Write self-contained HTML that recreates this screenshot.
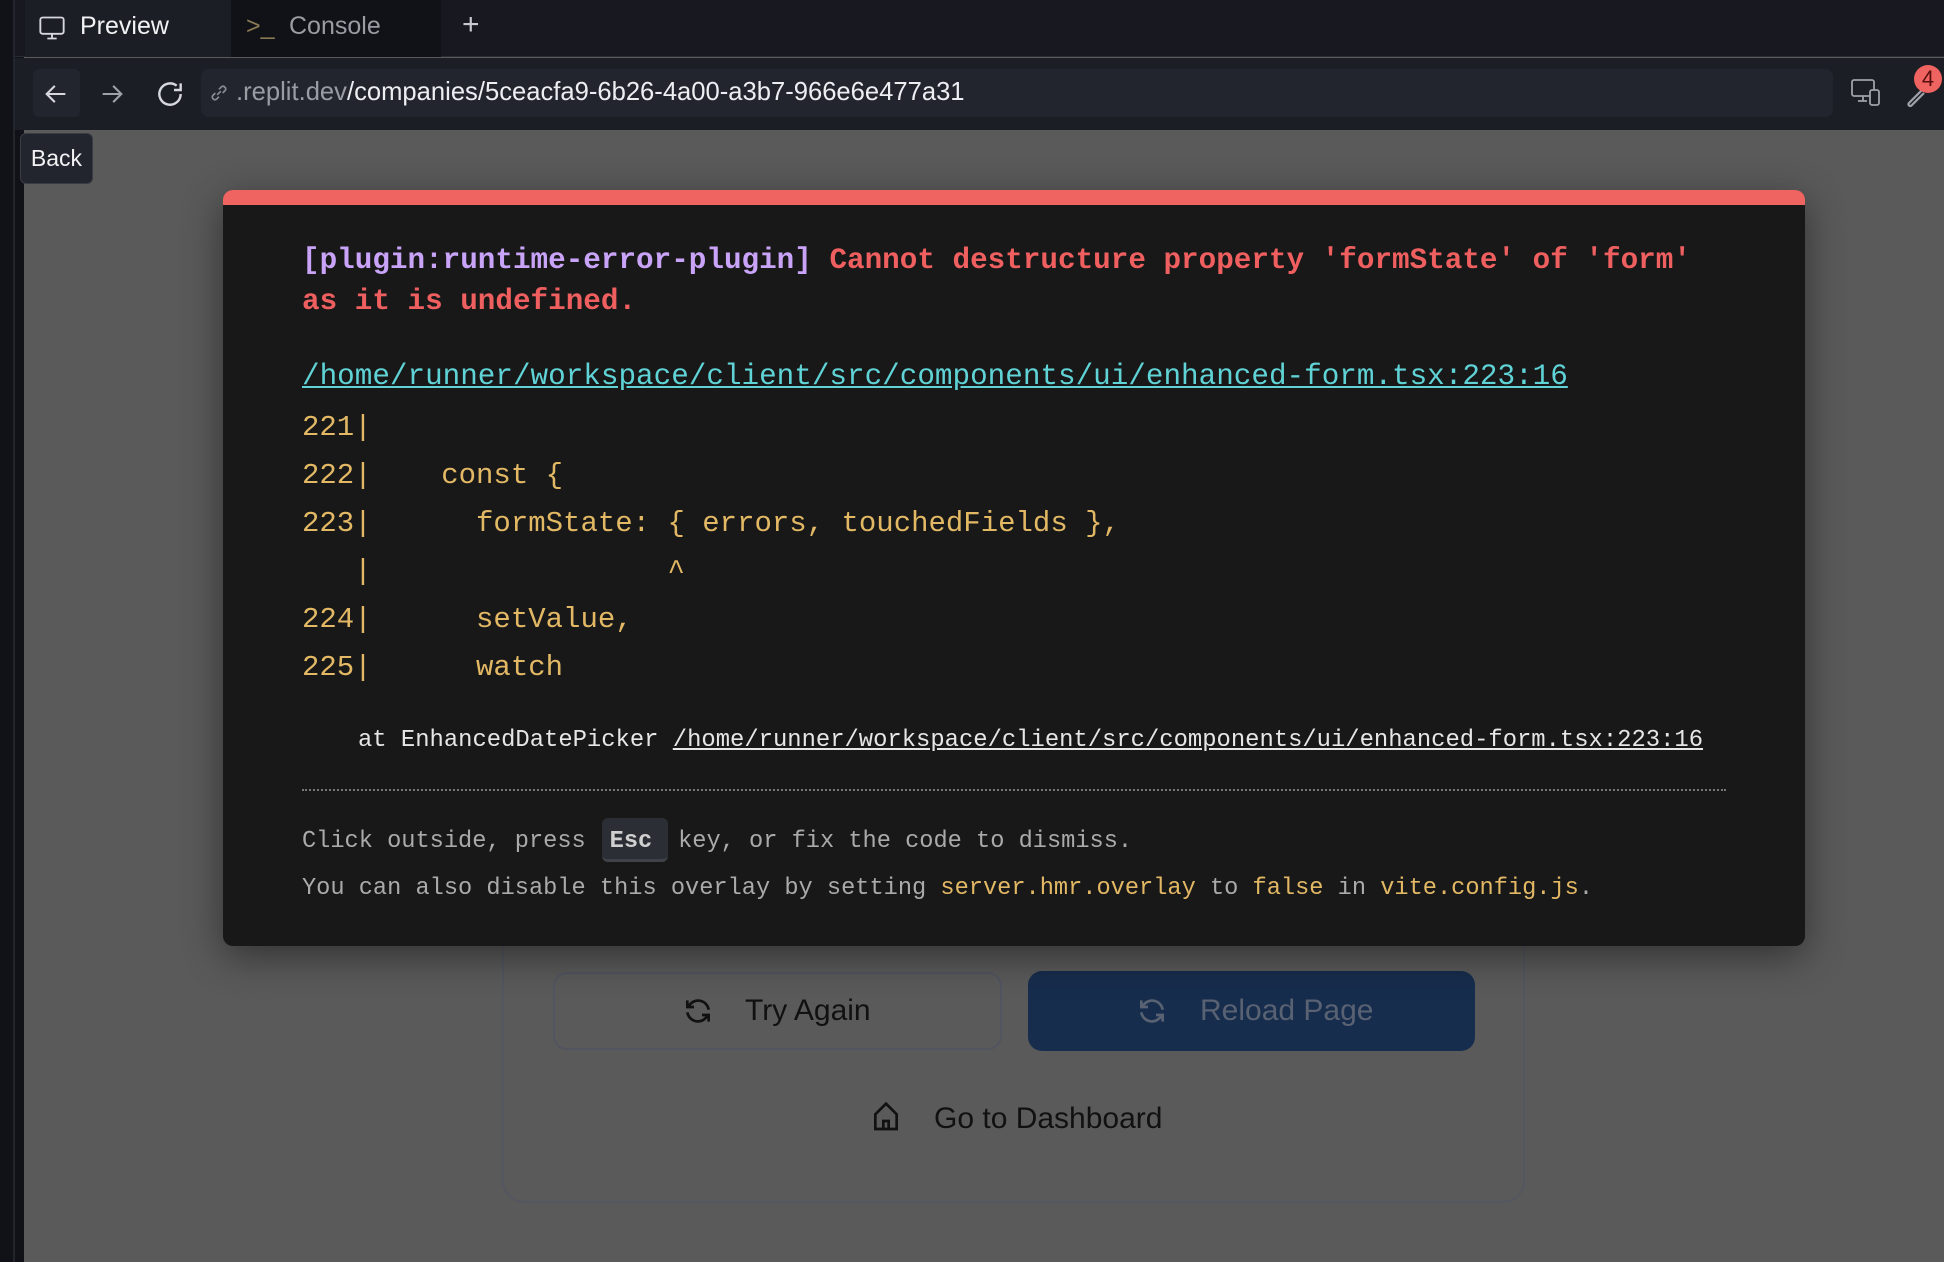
<!DOCTYPE html>
<html><head><meta charset="utf-8"><style>
*{margin:0;padding:0;box-sizing:border-box}
body{width:1944px;height:1262px;overflow:hidden;background:#5a5a5a;font-family:"Liberation Sans",sans-serif;position:relative}
.abs{position:absolute;white-space:pre}
.mono{font-family:"Liberation Mono",monospace}
</style></head><body>
<div class="abs" style="left:0;top:0;width:24px;height:1262px;background:#111217"></div>
<div class="abs" style="left:13px;top:0;width:2px;height:1262px;background:#23252d"></div>
<div class="abs" style="left:15px;top:0;width:1929px;height:57px;background:#181920;border-bottom:1px solid #2a2c35"></div>
<div class="abs" style="left:25px;top:0;width:206px;height:57px;background:#1c1e26"></div>
<div class="abs" style="left:231px;top:0;width:210px;height:57px;background:#111217"></div>
<svg class="abs" style="left:38px;top:14px" width="28" height="28" viewBox="0 0 24 24" fill="none" stroke="#d6d8de" stroke-width="1.6"><rect x="2" y="3" width="20" height="14" rx="2"/><path d="M12 17v4M8 21h8"/></svg>
<div class="abs" style="left:80px;top:12px;font-size:25px;color:#f2f2f4">Preview</div>
<div class="abs" style="left:246px;top:12px;font-size:25px;color:#8a7a55">&gt;_</div>
<div class="abs" style="left:289px;top:12px;font-size:25px;color:#9a9ca4">Console</div>
<div class="abs" style="left:462px;top:8px;font-size:30px;color:#c8cad0">+</div>
<div class="abs" style="left:15px;top:58px;width:1929px;height:72px;background:#1c1e26"></div>
<div class="abs" style="left:33px;top:69px;width:47px;height:48px;background:#23252e;border-radius:6px"></div>
<svg class="abs" style="left:42px;top:80px" width="28" height="28" viewBox="0 0 24 24" fill="none" stroke="#d6d8de" stroke-width="1.8"><path d="M20 12H5M11 5l-7 7 7 7"/></svg>
<svg class="abs" style="left:98px;top:80px" width="28" height="28" viewBox="0 0 24 24" fill="none" stroke="#a0a2aa" stroke-width="1.8"><path d="M4 12h15M13 5l7 7-7 7"/></svg>
<svg class="abs" style="left:154px;top:78px" width="32" height="32" viewBox="0 0 24 24" fill="none" stroke="#d6d8de" stroke-width="1.8"><path d="M20 12a8 8 0 1 1-3-6.2M20 4v5h-5"/></svg>
<div class="abs" style="left:201px;top:69px;width:1632px;height:48px;background:#23252e;border-radius:8px"></div>
<svg class="abs" style="left:208px;top:82px" width="22" height="22" viewBox="0 0 24 24" fill="none" stroke="#8a8c94" stroke-width="1.8"><path d="M10 14l4-4M8 12l-3 3a3 3 0 0 0 4 4l3-3M16 12l3-3a3 3 0 0 0-4-4l-3 3"/></svg>
<div class="abs" style="left:236px;top:78px;font-size:25.6px;color:#9a9ca4">.replit.dev<span style="color:#eceef2">/companies/5ceacfa9-6b26-4a00-a3b7-966e6e477a31</span></div>
<svg class="abs" style="left:1850px;top:78px" width="32" height="30" viewBox="0 0 32 30" fill="none" stroke="#a0a2aa" stroke-width="1.8"><rect x="2" y="2" width="22" height="16" rx="2"/><path d="M13 18v5M8 23h9"/><rect x="20" y="12" width="9" height="15" rx="2" fill="#1c1e26"/></svg>
<svg class="abs" style="left:1904px;top:78px" width="30" height="30" viewBox="0 0 24 24" fill="none" stroke="#a0a2aa" stroke-width="1.8"><path d="M14 10l-10 10a1.4 1.4 0 0 0 2 2l10-10"/></svg>
<div class="abs" style="left:1914px;top:65px;width:28px;height:28px;border-radius:50%;background:#ef6460;color:#5a0e0e;font-size:22px;text-align:center;line-height:28px">4</div>
<div class="abs" style="left:20px;top:133px;width:73px;height:51px;background:#23252e;border:1px solid #3a3c45;border-radius:6px;color:#f2f2f4;font-size:23px;line-height:49px;text-align:center">Back</div>

<!-- underlying card -->
<div class="abs" style="left:502px;top:880px;width:1023px;height:323px;border:2px solid #545660;border-top:none;border-radius:0 0 22px 22px;background:#5a5a5a"></div>
<div class="abs" style="left:553px;top:972px;width:449px;height:78px;border:2px solid #525460;border-radius:14px"></div>
<svg class="abs" style="left:682px;top:995px" width="32" height="32" viewBox="0 0 24 24" fill="none" stroke="#111" stroke-width="2"><path d="M20 11a8 8 0 0 0-14-4l-2 2M4 4v5h5M4 13a8 8 0 0 0 14 4l2-2M20 20v-5h-5"/></svg>
<div class="abs" style="left:745px;top:994px;font-size:30px;color:#111">Try Again</div>
<div class="abs" style="left:1028px;top:971px;width:447px;height:80px;background:#172d4d;border-radius:14px"></div>
<svg class="abs" style="left:1136px;top:995px" width="32" height="32" viewBox="0 0 24 24" fill="none" stroke="#596272" stroke-width="2"><path d="M20 11a8 8 0 0 0-14-4l-2 2M4 4v5h5M4 13a8 8 0 0 0 14 4l2-2M20 20v-5h-5"/></svg>
<div class="abs" style="left:1200px;top:994px;font-size:30px;color:#596272">Reload Page</div>
<svg class="abs" style="left:870px;top:1101px" width="32" height="32" viewBox="0 0 24 24" fill="none" stroke="#111" stroke-width="2"><path d="M4 21V10l8-8 8 8v11zM10 21v-6h4v6"/></svg>
<div class="abs" style="left:934px;top:1102px;font-size:30px;color:#111">Go to Dashboard</div>

<!-- overlay -->
<div class="abs" style="left:223px;top:190px;width:1582px;height:756px;background:#181818;border-radius:10px;border-top:15px solid #ef6460;box-shadow:0 10px 40px rgba(0,0,0,.45)"></div>
<div class="abs mono" style="left:302px;top:240px;font-size:29.3px;font-weight:bold;line-height:41px;color:#ef5f5f"><span style="color:#c9a3f7">[plugin:runtime-error-plugin]</span> Cannot destructure property 'formState' of 'form'
as it is undefined.</div>
<div class="abs mono" style="left:302px;top:360px;font-size:29.3px;color:#5fd3d6;text-decoration:underline">/home/runner/workspace/client/src/components/ui/enhanced-form.tsx:223:16</div>
<div class="abs mono" style="left:302px;top:404px;font-size:29px;line-height:48px;color:#e2b865">221|
222|    const {
223|      formState: { errors, touchedFields },
   |                 ^
224|      setValue,
225|      watch</div>
<div class="abs mono" style="left:358px;top:727px;font-size:23.85px;color:#e6e6e6">at EnhancedDatePicker <span style="text-decoration:underline">/home/runner/workspace/client/src/components/ui/enhanced-form.tsx:223:16</span></div>
<div class="abs" style="left:302px;top:789px;width:1424px;height:0;border-top:2px dotted #777"></div>
<div class="abs" style="left:602px;top:818px;width:66px;height:44px;background:#2c2e35;border-radius:6px;border-bottom:3px solid #40424a"></div>
<div class="abs mono" style="left:302px;top:818px;font-size:23.65px;line-height:47px;color:#aaaaaa">Click outside, press <b style="color:#d0d0d0;display:inline-block;width:66px;text-align:center;margin-left:-2px">Esc</b> key, or fix the code to dismiss.
You can also disable this overlay by setting <span style="color:#e2b865">server.hmr.overlay</span> to <span style="color:#e2b865">false</span> in <span style="color:#e2b865">vite.config.js</span>.</div>
</body></html>
